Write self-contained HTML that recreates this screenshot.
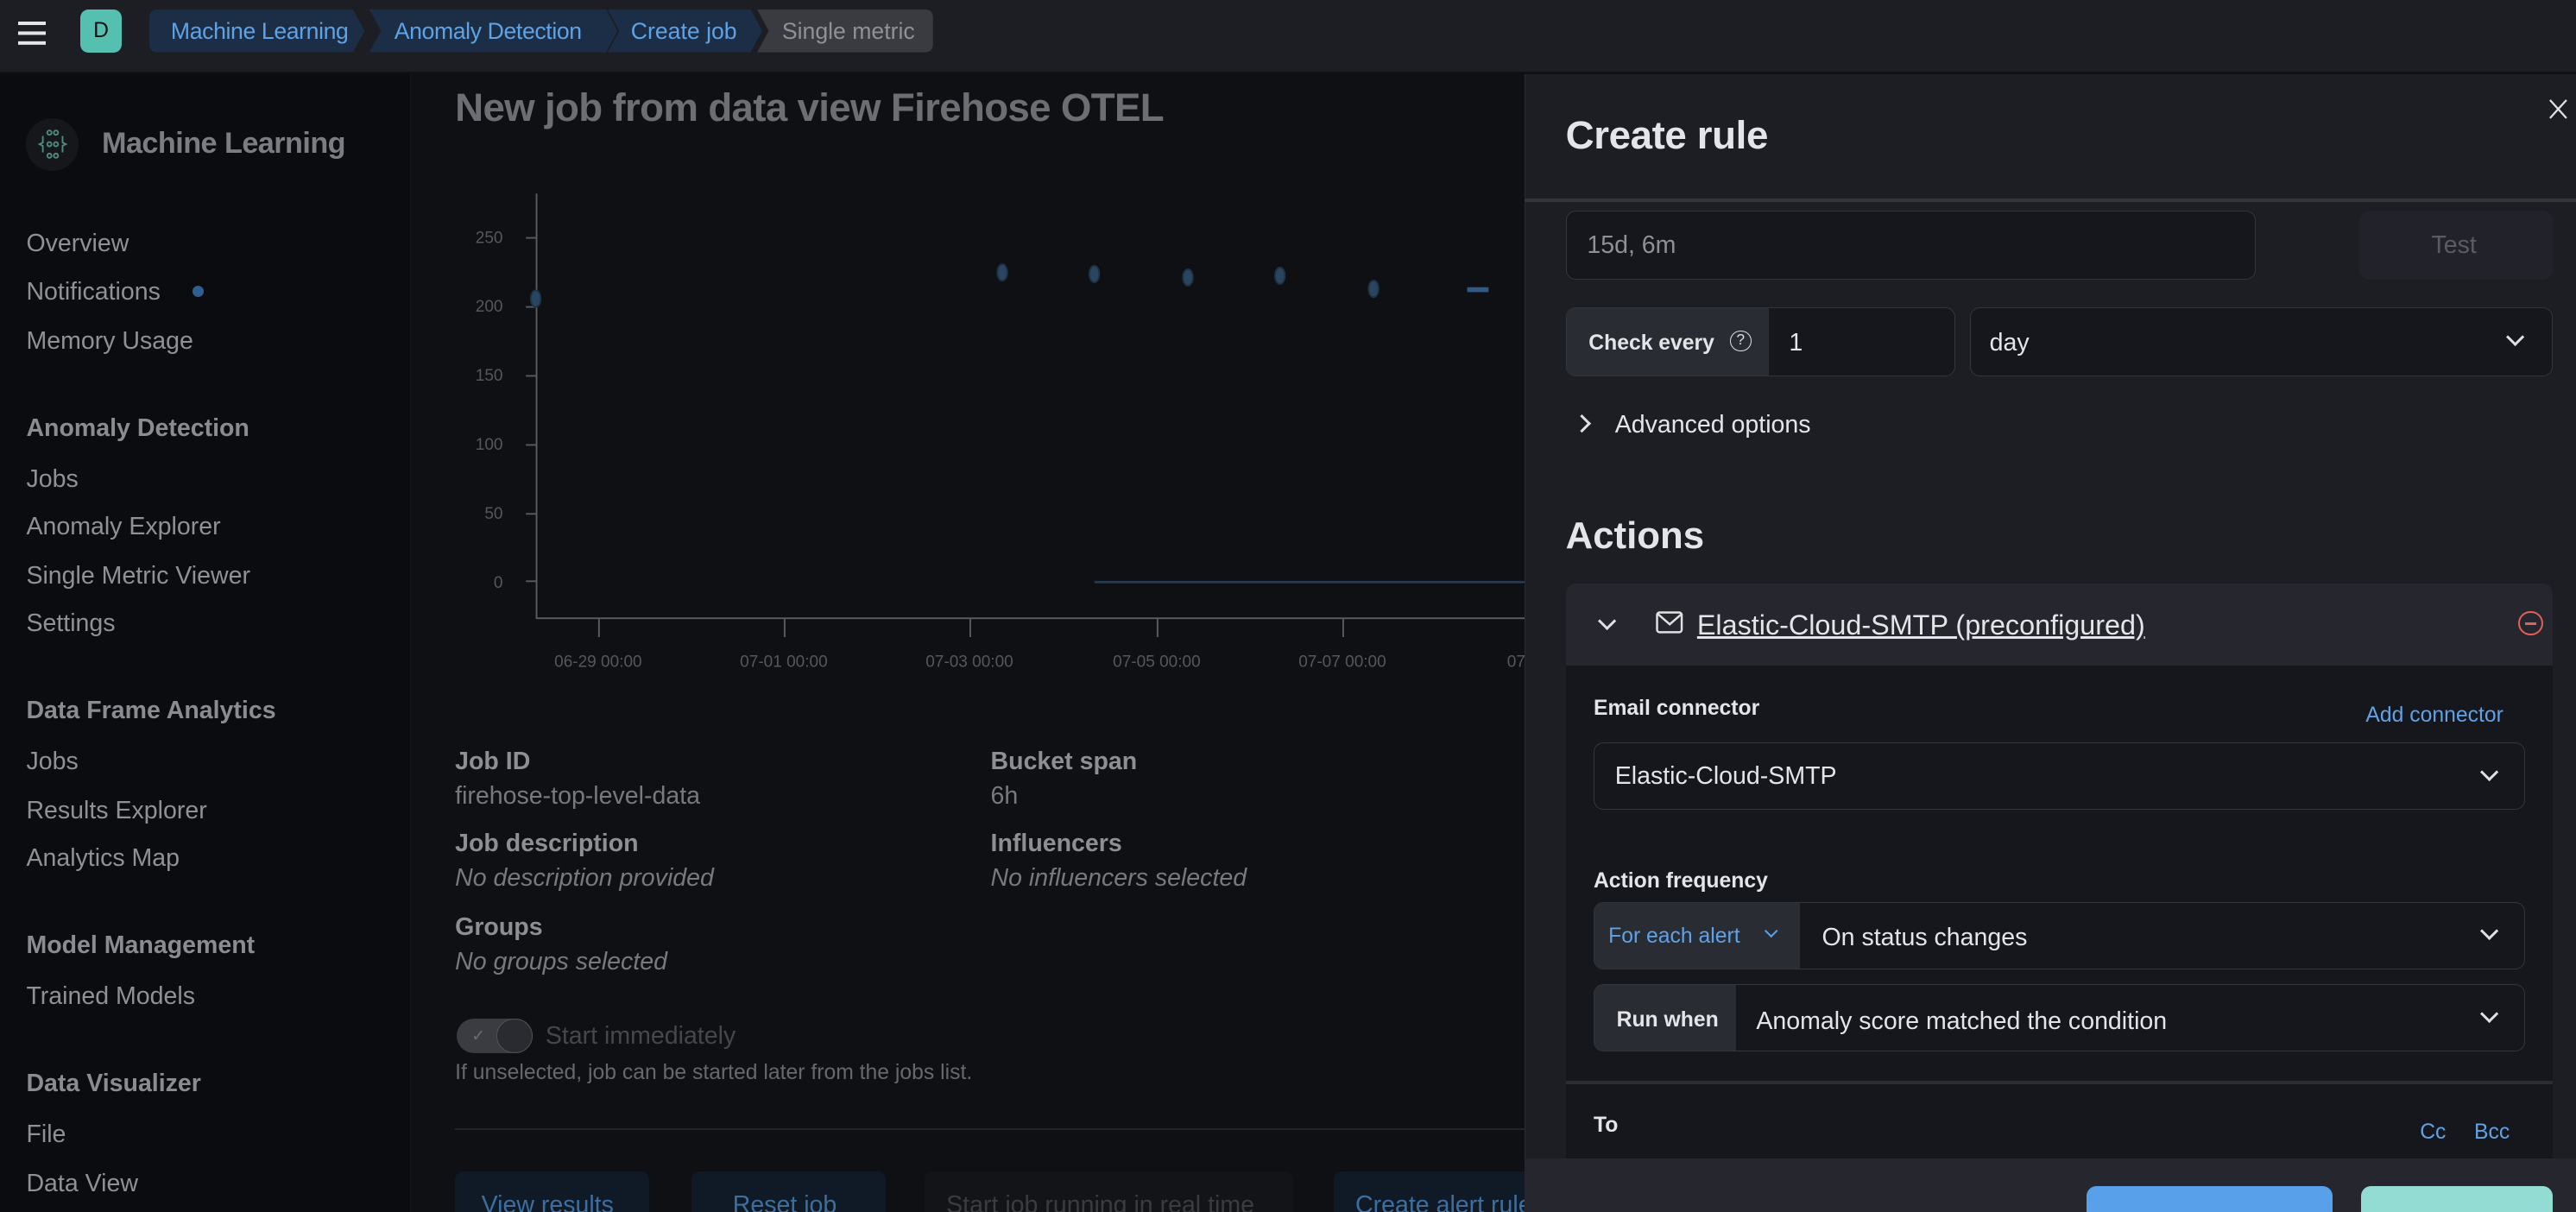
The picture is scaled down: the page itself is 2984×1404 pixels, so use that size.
<!DOCTYPE html>
<html><head><meta charset="utf-8"><style>
*{box-sizing:border-box;margin:0;padding:0}
html,body{width:2984px;height:1404px;overflow:hidden;background:#0f1013}
#w{zoom:1.90306;width:1568px;height:738px;position:relative;font-family:"Liberation Sans",sans-serif;overflow:hidden}
.a{position:absolute;white-space:nowrap}
.sb{color:#8f9197;font-size:15px}
.sh{color:#8a8c92;font-size:15px;font-weight:bold}
.lbl{color:#8d8f94;font-size:15px;font-weight:bold}
.val{color:#77797e;font-size:15px}
.it{color:#77797e;font-size:15px;font-style:italic}
.inp{position:absolute;background:#16171c;border:1px solid #34363e;border-radius:6px}
.wt{color:#e4e5e9}
.chev{position:absolute;width:8px;height:8px;border-right:1.6px solid #dfe0e4;border-bottom:1.6px solid #dfe0e4;transform:rotate(45deg)}
.s1{top:1px}
</style></head><body><div id="w">
<div class="a" style="left:0;top:0;width:1568px;height:44px;background:#1d1e24;border-bottom:1px solid #111216"></div>
<div class="a" style="left:11px;top:13px;width:17px;height:2.4px;background:#e4e5e9;box-shadow:0 6px 0 #e4e5e9,0 12px 0 #e4e5e9"></div>
<div class="a" style="left:49px;top:6px;width:25px;height:26px;background:#55bfb0;border-radius:5px;color:#111;font-size:13px;text-align:center;line-height:26px">D</div>
<div class="a" style="left:91px;top:6px;width:477px;height:26px">
<svg width="477" height="26" style="position:absolute;left:0;top:0">
<path d="M5 0H124L131 13L124 26H5Q0 26 0 21V5Q0 0 5 0Z" fill="#1b2e45"/>
<path d="M134 0H278L285 13L278 26H134L141 13Z" fill="#1b2e45"/>
<path d="M279 0H366L373 13L366 26H279L286 13Z" fill="#1b2e45"/>
<path d="M370 0H472Q477 0 477 5V21Q477 26 472 26H370L377 13Z" fill="#3a3b41"/>
</svg>
<span class="a" style="left:13px;top:5px;color:#5fa2e6;font-size:14px;letter-spacing:-0.2px">Machine Learning</span>
<span class="a" style="left:149px;top:5px;color:#5fa2e6;font-size:14px;letter-spacing:-0.2px">Anomaly Detection</span>
<span class="a" style="left:293px;top:5px;color:#5fa2e6;font-size:14px">Create job</span>
<span class="a" style="left:385px;top:5px;color:#8f9197;font-size:14px">Single metric</span>
</div>
<div class="a" style="left:0;top:45px;width:250px;height:693px;background:#0b0c0f;border-right:1px solid #16171b"></div>
<div class="a" style="left:16px;top:72px;width:32px;height:32px;border-radius:16px;background:#15171a"></div>
<svg class="a" style="left:22px;top:78px" width="20" height="20"><g fill="none" stroke="#4f8a83" stroke-width="1"><circle cx="8" cy="3" r="1.3"/><circle cx="12" cy="3" r="1.3"/><circle cx="8" cy="10" r="1.3"/><circle cx="12" cy="10" r="1.3"/><circle cx="8" cy="17" r="1.3"/><circle cx="12" cy="17" r="1.3"/><path d="M4 5V9L2 10L4 11V15M16 5V9L18 10L16 11V15"/></g></svg>
<div class="a" style="left:62px;top:77px;color:#7b7d82;font-size:18px;font-weight:bold;letter-spacing:-0.3px">Machine Learning</div>
<div class="a sb" style="left:16px;top:140px">Overview</div>
<div class="a sb" style="left:16px;top:169px">Notifications</div>
<div class="a" style="left:117px;top:174px;width:7px;height:7px;border-radius:4px;background:#2f5f90"></div>
<div class="a sb" style="left:16px;top:199px">Memory Usage</div>
<div class="a sh" style="left:16px;top:252px">Anomaly Detection</div>
<div class="a sb" style="left:16px;top:283px">Jobs</div>
<div class="a sb" style="left:16px;top:312px">Anomaly Explorer</div>
<div class="a sb" style="left:16px;top:342px">Single Metric Viewer</div>
<div class="a sb" style="left:16px;top:371px">Settings</div>
<div class="a sh" style="left:16px;top:424px">Data Frame Analytics</div>
<div class="a sb" style="left:16px;top:455px">Jobs</div>
<div class="a sb" style="left:16px;top:485px">Results Explorer</div>
<div class="a sb" style="left:16px;top:514px">Analytics Map</div>
<div class="a sh" style="left:16px;top:567px">Model Management</div>
<div class="a sb" style="left:16px;top:598px">Trained Models</div>
<div class="a sh" style="left:16px;top:651px">Data Visualizer</div>
<div class="a sb" style="left:16px;top:682px">File</div>
<div class="a sb" style="left:16px;top:712px">Data View</div>
<div class="a" style="left:277px;top:52px;color:#6c6e73;font-size:24px;font-weight:bold;letter-spacing:-0.35px">New job from data view Firehose OTEL</div>
<svg class="a" style="left:270px;top:110px" width="660" height="310">
<g stroke="#5a5c61" stroke-width="1" fill="none">
<path d="M56.5 8V266.5H658"/>
<path d="M50 35H56M50 77H56M50 119H56M50 161H56M50 203H56M50 244H56"/>
<path d="M94.5 267V278M207.5 267V278M320.5 267V278M434.5 267V278M547.5 267V278"/>
</g>
<g fill="#2a4560" stroke="#1f3347"><ellipse cx="56" cy="72" rx="3" ry="5"/><ellipse cx="340" cy="56" rx="3" ry="5"/><ellipse cx="396" cy="57" rx="3" ry="5"/><ellipse cx="453" cy="59" rx="3" ry="5"/><ellipse cx="509" cy="58" rx="3" ry="5"/><ellipse cx="566" cy="66" rx="3" ry="5"/></g>
<rect x="623" y="65" width="13" height="3" fill="#2e5a85"/>
<path d="M396 244.5H660" stroke="#1f3b58" stroke-width="1.5"/>
<g fill="#55575c" font-size="10" font-family="Liberation Sans" text-anchor="end"><text x="36" y="38">250</text><text x="36" y="80">200</text><text x="36" y="122">150</text><text x="36" y="164">100</text><text x="36" y="206">50</text><text x="36" y="248">0</text></g>
<g fill="#55575c" font-size="10" font-family="Liberation Sans" text-anchor="middle"><text x="94" y="296">06-29 00:00</text><text x="207" y="296">07-01 00:00</text><text x="320" y="296">07-03 00:00</text><text x="434" y="296">07-05 00:00</text><text x="547" y="296">07-07 00:00</text><text x="660" y="296">07-09</text></g>
</svg>
<div class="a lbl" style="left:277px;top:455px">Job ID</div>
<div class="a val" style="left:277px;top:476px">firehose-top-level-data</div>
<div class="a lbl" style="left:277px;top:505px">Job description</div>
<div class="a it" style="left:277px;top:526px">No description provided</div>
<div class="a lbl" style="left:277px;top:556px">Groups</div>
<div class="a it" style="left:277px;top:577px">No groups selected</div>
<div class="a lbl" style="left:603px;top:455px">Bucket span</div>
<div class="a val" style="left:603px;top:476px">6h</div>
<div class="a lbl" style="left:603px;top:505px">Influencers</div>
<div class="a it" style="left:603px;top:526px">No influencers selected</div>
<div class="a" style="left:278px;top:620px;width:46px;height:21px;border-radius:11px;background:#3b3c42"></div>
<div class="a" style="left:302px;top:620px;width:22px;height:21px;border-radius:11px;background:#2a2b30;border:1px solid #505257"></div>
<div class="a" style="left:287px;top:625px;color:#6a6c71;font-size:10px">✓</div>
<div class="a" style="left:332px;top:622px;color:#45474c;font-size:15px">Start immediately</div>
<div class="a" style="left:277px;top:646px;color:#66686d;font-size:13px">If unselected, job can be started later from the jobs list.</div>
<div class="a" style="left:277px;top:687px;width:651px;height:1px;background:#23242a"></div>
<div class="a" style="left:277px;top:713px;width:118px;height:40px;border-radius:5px;background:#0f1a26"></div>
<div class="a" style="left:293px;top:725px;color:#3e6e9e;font-size:15px">View results</div>
<div class="a" style="left:421px;top:713px;width:118px;height:40px;border-radius:5px;background:#0f1a26"></div>
<div class="a" style="left:446px;top:725px;color:#3e6e9e;font-size:15px">Reset job</div>
<div class="a" style="left:563px;top:713px;width:224px;height:40px;border-radius:5px;background:#131418"></div>
<div class="a" style="left:576px;top:725px;color:#3a3c41;font-size:15px">Start job running in real time</div>
<div class="a" style="left:812px;top:713px;width:140px;height:40px;border-radius:5px;background:#0f1a26"></div>
<div class="a" style="left:825px;top:725px;color:#3e6e9e;font-size:15px">Create alert rule</div>
<div class="a" style="left:928px;top:45px;width:640px;height:693px;background:#1d1e24;border-left:1px solid #2a2b31"></div>
<svg class="a" style="left:1551px;top:60px" width="12" height="13"><path d="M1 1L11 12M11 1L1 12" stroke="#dfe0e4" stroke-width="1.2"/></svg>
<div class="a wt" style="left:953px;top:69px;font-size:24px;font-weight:bold;letter-spacing:-0.2px">Create rule</div>
<div class="a" style="left:928px;top:121px;width:640px;height:2px;background:#33353c"></div>
<div class="inp" style="left:953px;top:128px;width:420px;height:42px"></div>
<div class="a" style="left:966px;top:141px;color:#8e9095;font-size:15px">15d, 6m</div>
<div class="a" style="left:1436px;top:128px;width:118px;height:42px;border-radius:6px;background:#22232a"></div>
<div class="a" style="left:1480px;top:141px;color:#5a5c62;font-size:15px">Test</div>
<div class="inp" style="left:953px;top:187px;width:237px;height:42px;overflow:hidden"><div style="position:absolute;left:0;top:0;width:123px;height:42px;background:#2a2c33"></div></div>
<div class="a wt" style="left:967px;top:202px;font-size:13px;font-weight:bold">Check every</div>
<div class="a" style="left:1053px;top:201px;width:13px;height:13px;border:1px solid #dfe0e4;border-radius:7px;color:#dfe0e4;font-size:9px;text-align:center;line-height:11px">?</div>
<div class="a wt" style="left:1089px;top:200px;font-size:15px">1</div>
<div class="inp" style="left:1199px;top:187px;width:355px;height:42px"></div>
<div class="a wt" style="left:1211px;top:200px;font-size:15px">day</div>
<div class="chev" style="left:1527px;top:201px"></div>
<div class="chev" style="left:959px;top:254px;transform:rotate(-45deg)"></div>
<div class="a wt" style="left:983px;top:250px;font-size:15px">Advanced options</div>
<div class="a wt" style="left:953px;top:313px;font-size:23px;font-weight:bold">Actions</div>
<div class="a" style="left:953px;top:355px;width:601px;height:360px;background:#16171c;border-radius:6px 6px 0 0"></div>
<div class="a" style="left:953px;top:355px;width:601px;height:50px;background:#25262e;border-radius:6px 6px 0 0"></div>
<div class="chev" style="left:974px;top:374px"></div>
<svg class="a" style="left:1008px;top:372px" width="17" height="14"><rect x="0.8" y="0.8" width="15" height="12" rx="1.5" fill="none" stroke="#dfe0e4" stroke-width="1.3"/><path d="M1 1.5L8.5 8L16 1.5" fill="none" stroke="#dfe0e4" stroke-width="1.3"/></svg>
<div class="a wt" style="left:1033px;top:371px;font-size:17px;text-decoration:underline">Elastic-Cloud-SMTP (preconfigured)</div>
<div class="a" style="left:1533px;top:372px;width:15px;height:15px;border:1.3px solid #e0605a;border-radius:8px"></div>
<div class="a" style="left:1537px;top:379px;width:7px;height:1.5px;background:#e0605a"></div>
<div class="a wt" style="left:970px;top:424px;font-size:13px;font-weight:bold">Email connector</div>
<div class="a" style="left:1440px;top:428px;color:#5fa2e6;font-size:13px">Add connector</div>
<div class="inp" style="left:970px;top:452px;width:567px;height:41px"></div>
<div class="a wt" style="left:983px;top:464px;font-size:15px">Elastic-Cloud-SMTP</div>
<div class="chev" style="left:1511px;top:466px"></div>
<div class="a wt" style="left:970px;top:529px;font-size:13px;font-weight:bold">Action frequency</div>
<div class="inp" style="left:970px;top:549px;width:567px;height:41px;overflow:hidden"><div style="position:absolute;left:0;top:0;width:125px;height:41px;background:#2a2c33"></div></div>
<div class="a" style="left:979px;top:563px;color:#5fa2e6;font-size:13px">For each alert</div>
<div class="a" style="left:1075px;top:564px;width:6px;height:6px;border-right:1.3px solid #5fa2e6;border-bottom:1.3px solid #5fa2e6;transform:rotate(45deg)"></div>
<div class="a wt" style="left:1109px;top:562px;font-size:15px">On status changes</div>
<div class="chev" style="left:1511px;top:563px"></div>
<div class="inp" style="left:970px;top:599px;width:567px;height:41px;overflow:hidden"><div style="position:absolute;left:0;top:0;width:86px;height:41px;background:#2a2c33"></div></div>
<div class="a wt" style="left:984px;top:614px;font-size:13px;font-weight:bold">Run when</div>
<div class="a wt" style="left:1069px;top:613px;font-size:15px">Anomaly score matched the condition</div>
<div class="chev" style="left:1511px;top:613px"></div>
<div class="a" style="left:953px;top:658px;width:601px;height:2px;background:#2c2d34"></div>
<div class="a wt" style="left:970px;top:678px;font-size:13px;font-weight:bold">To</div>
<div class="a" style="left:1473px;top:682px;color:#5fa2e6;font-size:13px">Cc</div>
<div class="a" style="left:1506px;top:682px;color:#5fa2e6;font-size:13px">Bcc</div>
<div class="a" style="left:928px;top:705px;width:640px;height:33px;background:#25262e"></div>
<div class="a" style="left:1270px;top:722px;width:150px;height:40px;border-radius:6px;background:#58a0e9"></div>
<div class="a" style="left:1437px;top:722px;width:117px;height:40px;border-radius:6px;background:#93dcd4"></div>
</div></body></html>
